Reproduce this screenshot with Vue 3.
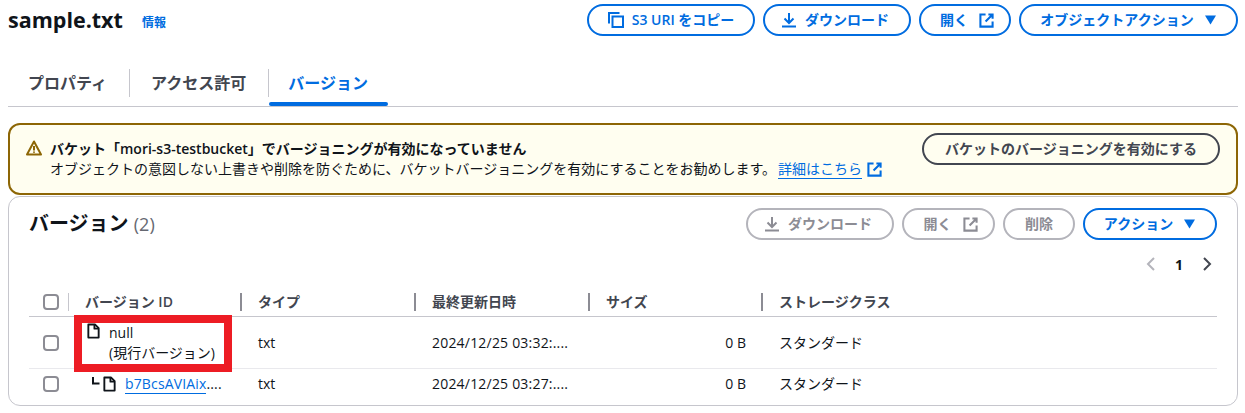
<script setup>
const headers = ['バージョン ID', 'タイプ', '最終更新日時', 'サイズ', 'ストレージクラス']
const tabs = [
  { label: 'プロパティ', active: false },
  { label: 'アクセス許可', active: false },
  { label: 'バージョン', active: true },
]
</script>

<template>
  <div class="page">
    <header class="top">
      <div class="title-wrap">
        <h1>sample.txt</h1>
        <a class="info">情報</a>
      </div>
      <div class="btns">
        <button class="btn w-copy">
          <svg class="ic" viewBox="0 0 16 16"><path d="M1 11.500V1h10.500" /><path d="M4.500 4.500h10.500v10.500H4.500z" /></svg>
          <span>S3 URI をコピー</span>
        </button>
        <button class="btn w-dl">
          <svg class="ic" viewBox="0 0 16 16"><path d="M1 14.500h14M8 1v9.500M3.500 6.500 8 11l4.500-4.500" /></svg>
          <span>ダウンロード</span>
        </button>
        <button class="btn w-open">
          <span>開く</span>
          <svg class="ic ext-ic" viewBox="0 0 16 16"><path d="M7 1.500H1.500v13h13V9" /><path d="M10 1.500h4.500V6M14.500 1.500 7 9" /></svg>
        </button>
        <button class="btn w-objact">
          <span>オブジェクトアクション</span>
          <svg class="caret" viewBox="0 0 12 10"><path d="M0.500 0.500h11L6 9.500z" /></svg>
        </button>
      </div>
    </header>

    <nav class="tabs">
      <div v-for="t in tabs" :key="t.label" class="tab" :class="{ active: t.active }">{{ t.label }}</div>
    </nav>

    <section class="alert">
      <svg class="warn" viewBox="0 0 16 16"><path d="M8 1.500 15 14.500H1z" /><path d="M8 6v4.500M8 11.500v1.300" /></svg>
      <div class="alert-body">
        <div class="alert-title">バケット「mori-s3-testbucket」でバージョニングが有効になっていません</div>
        <div class="alert-text">
          オブジェクトの意図しない上書きや削除を防ぐために、バケットバージョニングを有効にすることをお勧めします。<a class="link">詳細はこちら</a>
          <svg class="ext" viewBox="0 0 16 16"><path d="M7 1.500H1.500v13h13V9" /><path d="M10 1.500h4.500V6M14.500 1.500 7 9" /></svg>
        </div>
      </div>
      <button class="btn enable">バケットのバージョニングを有効にする</button>
    </section>

    <section class="panel">
      <div class="panel-head">
        <h2>バージョン <span class="count">(2)</span></h2>
        <div class="panel-btns">
          <button class="btn off w-dl2">
            <svg class="ic" viewBox="0 0 16 16"><path d="M1 14.500h14M8 1v9.500M3.500 6.500 8 11l4.500-4.500" /></svg>
            <span>ダウンロード</span>
          </button>
          <button class="btn off w-open2">
            <span>開く</span>
            <svg class="ic ext-ic" viewBox="0 0 16 16"><path d="M7 1.500H1.500v13h13V9" /><path d="M10 1.500h4.500V6M14.500 1.500 7 9" /></svg>
          </button>
          <button class="btn off w-del">削除</button>
          <button class="btn w-act">
            <span>アクション</span>
            <svg class="caret" viewBox="0 0 12 10"><path d="M0.500 0.500h11L6 9.500z" /></svg>
          </button>
        </div>
      </div>

      <div class="pager">
        <svg class="chev" viewBox="0 0 16 16"><path class="dim" d="M11 2 5 8l6 6" /></svg>
        <span class="page-no">1</span>
        <svg class="chev" viewBox="0 0 16 16"><path d="m5 2 6 6-6 6" /></svg>
      </div>

      <div class="table">
        <div class="row head">
          <div class="cell check"><span class="box"></span></div>
          <div v-for="h in headers" :key="h" class="cell th">{{ h }}</div>
        </div>
        <div class="row r1">
          <div class="cell check"><span class="box"></span></div>
          <div class="cell name">
            <svg class="file" viewBox="0 0 16 16"><path d="M2.500 1h7l4 4v10h-11z" /><path d="M9 1v4.500h4.500" /></svg>
            <div class="name-text">null<br />(現行バージョン)</div>
          </div>
          <div class="cell">txt</div>
          <div class="cell date">2024/12/25 03:32:....</div>
          <div class="cell size">0 B</div>
          <div class="cell">スタンダード</div>
        </div>
        <div class="row r2">
          <div class="cell check"><span class="box"></span></div>
          <div class="cell name child">
            <svg class="elbow" viewBox="0 0 8 8"><path d="M1 0v6.500h6.500" /></svg>
            <svg class="file" viewBox="0 0 16 16"><path d="M2.500 1h7l4 4v10h-11z" /><path d="M9 1v4.500h4.500" /></svg>
            <div class="trunc"><a class="link">b7BcsAVIAix</a>....</div>
          </div>
          <div class="cell">txt</div>
          <div class="cell date">2024/12/25 03:27:....</div>
          <div class="cell size">0 B</div>
          <div class="cell">スタンダード</div>
        </div>
        <div class="highlight"></div>
      </div>
    </section>
  </div>
</template>

<style>
html, body { margin: 0; background: #fff; }
</style>

<style scoped>
.page {
  width: 1245px;
  height: 413px;
  overflow: hidden;
  padding: 4px 7px 0 8px;
  box-sizing: border-box;
  font-family: "Open Sans", "Noto Sans CJK JP", sans-serif;
  font-size: 14px;
  color: #0f141a;
  background: #fff;
}
.top { display: flex; justify-content: space-between; height: 31px; }
.title-wrap { display: flex; align-items: center; }
h1 { margin: 0; font-size: 21.500px; font-weight: 700; line-height: 34px; }
.info { margin-left: 19px; margin-top: 5px; font-size: 12px; font-weight: 600; color: #006ce0; }
.btns { display: flex; gap: 8px; }
.panel-btns { display: flex; gap: 8px; }
.btn {
  display: inline-flex;
  align-items: center;
  justify-content: center;
  gap: 8px;
  height: 32px;
  box-sizing: border-box;
  padding: 0;
  border: 2px solid #006ce0;
  border-radius: 16px;
  background: transparent;
  color: #006ce0;
  font: 600 14px/18px "Open Sans", "Noto Sans CJK JP", sans-serif;
  white-space: nowrap;
}
.btn.off { border-color: #b4b4bb; color: #8c8c94; }
.ic { width: 16px; height: 16px; fill: none; stroke: currentColor; stroke-width: 2; flex: none; }
.ext-ic { width: 15px; height: 15px; stroke-width: 2.200; }
.caret { width: 13px; height: 10px; fill: currentColor; margin-left: 2px; }
.w-copy { width: 168px; padding-left: 0; }
.w-dl { width: 148px; padding-right: 4px; }
.w-open { width: 92px; gap: 11px; padding-left: 4px; }
.w-objact { width: 219px; }
.w-dl2 { width: 148px; padding-right: 4px; }
.w-open2 { width: 93px; gap: 11px; padding-left: 4px; }
.w-del { width: 72px; }
.w-act { width: 134px; }

.tabs {
  display: flex;
  height: 37px;
  margin-top: 34px;
  border-bottom: 1px solid #c6c6cd;
}
.tab {
  position: relative;
  height: 37px;
  padding: 0 22px;
  font-size: 16px;
  line-height: 28px;
  font-weight: 700;
  color: #424650;
}
.tab:first-child { padding: 0 22px 0 20px; }
.tab:last-child { padding: 0 20px 0 20px; }
.tab + .tab::before {
  content: "";
  position: absolute;
  left: 0;
  top: 0;
  height: 28px;
  width: 1px;
  background: #c6c6cd;
}
.tab.active { color: #006ce0; }
.tab.active::after {
  content: "";
  position: absolute;
  left: 1px;
  right: 0;
  bottom: 0;
  height: 4px;
  border-radius: 2px;
  background: #006ce0;
}

.alert {
  display: flex;
  margin-top: 16px;
  height: 72px;
  box-sizing: border-box;
  padding: 8px 16px 0 16px;
  border: 2px solid #8d6605;
  border-radius: 12px;
  background: #fffef0;
  line-height: 20px;
}
.warn {
  width: 16px;
  height: 16px;
  margin-top: 7px;
  fill: none;
  stroke: #8d6605;
  stroke-width: 2;
  stroke-linejoin: round;
  flex: none;
}
.alert-body { flex: 1; margin-left: 8px; padding-top: 6px; min-width: 0; white-space: nowrap; }
.alert-title { font-weight: 600; font-size: 14px; }
.alert-text { font-size: 14px; color: #0f141a; display: flex; align-items: center; }
.link { color: #006ce0; border-bottom: 1px solid #006ce0; line-height: 18px; margin-left: 2px; }
.ext { width: 15px; height: 15px; margin-left: 5px; fill: none; stroke: #006ce0; stroke-width: 2.200; flex: none; }
.enable {
  width: 298px;
  flex: none;
  border-color: #424650;
  color: #424650;
  margin-top: 0;
}

.panel {
  margin-top: 1px;
  height: 210px;
  box-sizing: border-box;
  border: 1px solid #c6c6cd;
  border-radius: 12px;
  padding: 11px 20px 0;
}
.panel-head { display: flex; justify-content: space-between; align-items: center; height: 32px; }
h2 { margin: -1px 0 0; font-size: 20px; font-weight: 700; line-height: 30px; }
.count { font-weight: 400; font-size: 18px; color: #656871; }
.pager {
  display: flex;
  justify-content: flex-end;
  align-items: center;
  gap: 16px;
  height: 20px;
  margin-top: 14px;
  padding-right: 2px;
}
.chev { width: 16px; height: 16px; fill: none; stroke: #424650; stroke-width: 2; }
.chev .dim { stroke: #b4b4bb; }
.page-no { font-weight: 700; font-size: 14px; color: #0f141a; }

.table { position: relative; margin-top: 13px; }
.row {
  display: grid;
  grid-template-columns: 39px 173px 174px 174px 173px 1fr;
  align-items: center;
}
.head { height: 29px; border-bottom: 1px solid #c6c6cd; }
.r1 { height: 51px; border-bottom: 1px solid #e9e9ed; }
.r2 { height: 30px; }
.cell { padding-left: 17px; white-space: nowrap; line-height: 20px; font-size: 14px; color: #0f141a; }
.date { letter-spacing: 0.200px; }
.check { padding-left: 14px; }
.head .check { position: relative; height: 18px; display: flex; align-items: center; }
.th {
  position: relative;
  font-weight: 600;
  color: #424650;
  font-size: 14px;
}
.th::before {
  content: "";
  position: absolute;
  left: -1px;
  top: 1px;
  height: 18px;
  width: 2px;
  background: #8c8c94;
}
.head .th:nth-child(2)::before { width: 1px; background: #c6c6cd; left: 0; }
.box {
  display: block;
  width: 12px;
  height: 12px;
  border: 2px solid #8c8c94;
  border-radius: 4px;
}
.name { display: flex; align-items: flex-start; padding-left: 18px; }
.file { width: 15px; height: 16px; fill: none; stroke: #0f141a; stroke-width: 2; stroke-linejoin: round; flex: none; margin-top: 0; }
.name-text { margin-left: 8px; line-height: 20px; font-size: 14px; }
.child { align-items: center; padding-left: 24px; }
.elbow { width: 8px; height: 8px; fill: none; stroke: #0f141a; stroke-width: 2; flex: none; margin: -6px 2px 0 0; }
.trunc { margin-left: 8px; color: #0f141a; font-size: 14px; letter-spacing: 0.150px; }
.trunc .link { line-height: 19px; display: inline-block; margin-left: 0; }
.size { text-align: right; padding-right: 16px; }
.highlight {
  position: absolute;
  left: 45px;
  top: 28px;
  width: 158px;
  height: 57px;
  box-sizing: border-box;
  border: 8px solid #ed1c24;
  pointer-events: none;
}
</style>
